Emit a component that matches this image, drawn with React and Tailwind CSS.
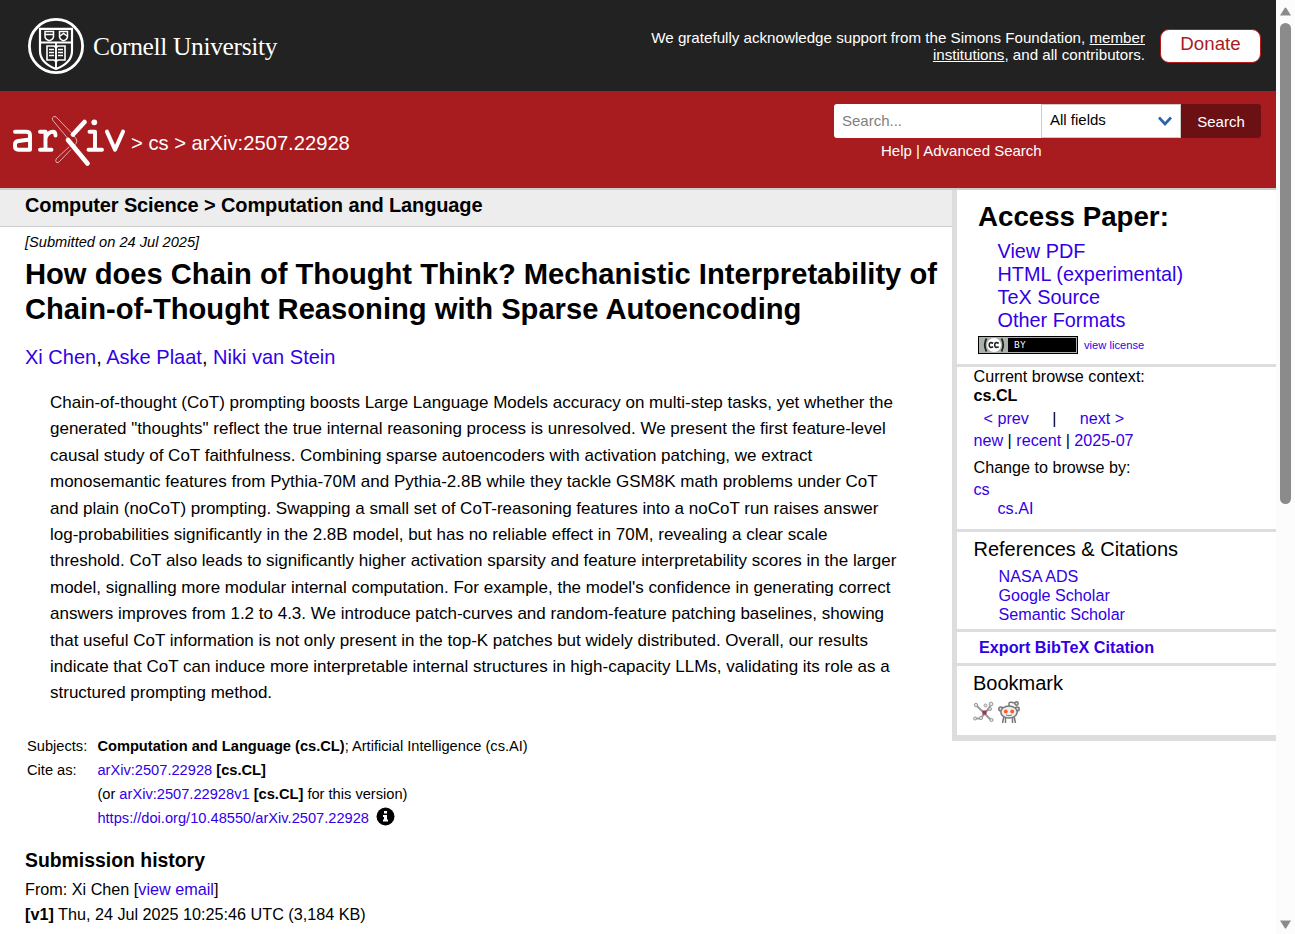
const A = ({ children, className = '' }) => <a href="#" className={'text-[#3200e6] ' + className}>{children}</a>;

const abstractLines = [
  'Chain-of-thought (CoT) prompting boosts Large Language Models accuracy on multi-step tasks, yet whether the',
  'generated "thoughts" reflect the true internal reasoning process is unresolved. We present the first feature-level',
  'causal study of CoT faithfulness. Combining sparse autoencoders with activation patching, we extract',
  'monosemantic features from Pythia-70M and Pythia-2.8B while they tackle GSM8K math problems under CoT',
  'and plain (noCoT) prompting. Swapping a small set of CoT-reasoning features into a noCoT run raises answer',
  'log-probabilities significantly in the 2.8B model, but has no reliable effect in 70M, revealing a clear scale',
  'threshold. CoT also leads to significantly higher activation sparsity and feature interpretability scores in the larger',
  "model, signalling more modular internal computation. For example, the model's confidence in generating correct",
  'answers improves from 1.2 to 4.3. We introduce patch-curves and random-feature patching baselines, showing',
  'that useful CoT information is not only present in the top-K patches but widely distributed. Overall, our results',
  'indicate that CoT can induce more interpretable internal structures in high-capacity LLMs, validating its role as a',
  'structured prompting method.',
];

function Seal() {
  return (
    <svg width="56" height="56" viewBox="0 0 56 56" fill="none" stroke="#fff">
      <circle cx="28" cy="28" r="26.6" strokeWidth="2.8" />
      <path d="M12 10.8H44V33C44 42 37 47.500 28 51C19 47.500 12 42 12 33Z" strokeWidth="2.200" />
      <path d="M12 24.5H44M28 24.5V51" strokeWidth="1.900" />
      <path d="M17 13.5H25.5V18.500C25.5 20.500 23.5 22 21.2 22.800C19 22 17 20.500 17 18.500ZM17 16.500H25.5M31.500 13.500H39.500V18.500C39.500 20.500 37.800 22 35.500 22.800C33.300 22 31.500 20.500 31.500 18.500ZM32 18L35.500 15.500L39 18" strokeWidth="1.500" />
      <path d="M19 28H26L28 29.500L30 28H37V42H30L28 43.500L26 42H19Z" strokeWidth="1.600" />
      <path d="M21 31.500H26M21 34.500H26M21 37.500H26M30 31.500H35M30 34.500H35M30 37.500H35" strokeWidth="1.500" />
    </svg>
  );
}

function ArxivLogo() {
  return (
    <svg width="114" height="52" viewBox="0 0 114 52" fill="none" stroke="#fff" strokeLinecap="round" strokeLinejoin="round">
      <path d="M3 15.700H14Q18 15.700 18 19V33.700H6.500Q3 33.700 3 30.500V28.500Q3 25.500 6.500 25L18 23.500" strokeWidth="3.900" />
      <path d="M28 15.700H33.500V33.700M28 33.700H39.500M33.500 22Q36 15.700 41 15.700Q43.500 15.700 43.500 19.500" strokeWidth="3.900" />
      <path d="M61 18.500L44 .8Q41.500 -.3 40.300 2Q40 3.500 41.500 5.200L55.500 22M61 18.500L64.300 23Q65.500 25.500 64 27.500L61 31M57 31L44.500 42.500Q42.800 45 44.500 46.500Q46 47.200 47.500 45.500L58.500 34" strokeWidth=".8" opacity=".8" />
      <path d="M72.500 6L61 18.500M56 24L75.500 47.500" strokeWidth="4.700" />
      <path d="M77.500 15.700H83V33.700M76.500 33.700H90" strokeWidth="3.900" />
      <circle cx="82.300" cy="6.300" r="2.900" fill="#fff" stroke="none" />
      <path d="M95 15.700L103 33.700L111 15.700" strokeWidth="4" />
    </svg>
  );
}

function CcBadge() {
  return (
    <span className="flex h-[18px] w-[100px] shrink-0 items-center border border-black bg-[#aab2ab] p-px">
      <span className="flex h-full w-[28px] items-center justify-center">
        <svg width="26" height="14" viewBox="0 0 26 14" fill="none">
          <circle cx="13" cy="7" r="7" fill="#fff" />
          <path d="M5.500 .5Q2 7 5.500 13.500M20.500 .5Q24 7 20.500 13.500" stroke="#222" strokeWidth="1.800" />
          <path d="M12.200 5.200Q8.200 3.500 8.200 7T12.200 8.800M17.700 5.200Q13.700 3.500 13.700 7T17.700 8.800" stroke="#222" strokeWidth="1.600" />
        </svg>
      </span>
      <span className="flex h-full flex-1 items-center bg-black pl-[6px] font-['DejaVu_Sans',sans-serif] text-[8.500px] tracking-[.8px] text-white">BY</span>
    </span>
  );
}

function Bibsonomy() {
  return (
    <svg width="22" height="22" viewBox="0 0 22 22" fill="#e4e4e4" stroke="#999" strokeWidth="1">
      <path d="M4 5L18 19M9 16L18 4M12 11L17 8M3 17.500H8L12 11" fill="none" strokeWidth="1.900" />
      <circle cx="3" cy="4" r="1.700" /><circle cx="18" cy="3" r="1.900" /><circle cx="12.500" cy="4.500" r="1.500" /><circle cx="2" cy="17.500" r="1.500" />
      <circle cx="8" cy="17" r="1.600" /><circle cx="18.500" cy="19" r="1.600" /><circle cx="17" cy="8" r="1.500" />
      <rect x="9.500" y="9.500" width="4" height="4" fill="#a03060" stroke="none" />
    </svg>
  );
}

function Reddit() {
  return (
    <svg width="22" height="22" viewBox="0 0 22 22" fill="none" stroke="#777" strokeWidth="1.500">
      <path d="M11 5V3Q11 1 13 1.200L17 2" /><circle cx="18.500" cy="2.500" r="1.700" fill="#ddd" />
      <path d="M6 15L4.500 22M16 15L17.500 22M7.500 17V22M14.500 17V22" />
      <circle cx="2.800" cy="8" r="2" fill="#ddd" /><circle cx="19.200" cy="8" r="2" fill="#ddd" />
      <ellipse cx="11" cy="11" rx="8.200" ry="6" fill="#eee" />
      <circle cx="7.800" cy="10.500" r="1.900" fill="#ff5a28" stroke="none" /><circle cx="14.200" cy="10.500" r="1.900" fill="#ff5a28" stroke="none" />
      <path d="M8 14Q11 15.500 14 14" strokeWidth="1" />
    </svg>
  );
}

export default function App() {
  return (
    <div className="flex h-[934px] w-[1295px] overflow-hidden bg-white font-['Liberation_Sans',Arial,sans-serif] text-black">
      <div className="flex w-[1276px] shrink-0 flex-col">
        <header className="flex h-[91px] shrink-0 justify-between bg-[#222] pl-7 pr-[15px] text-white">
          <div className="flex h-[92px] items-center gap-[9px]">
            <Seal />
            <span className="whitespace-nowrap pt-[2px] font-['Liberation_Serif',serif] text-[25.500px] leading-8 tracking-[-.36px]">Cornell University</span>
          </div>
          <div className="flex items-start gap-[15px] pt-[29px]">
            <p className="whitespace-nowrap text-right text-[15.150px] leading-[17px]">
              We gratefully acknowledge support from the Simons Foundation, <a href="#" className="underline">member<br />institutions</a>, and all contributors.
            </p>
            <a href="#" className="h-[34px] w-[101px] rounded-[9px] border border-[#b31b1b] bg-white text-center text-[18.700px] leading-[28px] text-[#a81c1f]">Donate</a>
          </div>
        </header>

        <div className="flex h-[97px] shrink-0 justify-between bg-[#a81c1f] pl-3 pr-[15px] text-white">
          <div className="flex items-start pt-[25px]">
            <ArxivLogo />
            <span className="whitespace-nowrap pl-[5px] pt-[15px] text-[20.200px] leading-6">&gt; cs &gt; arXiv:2507.22928</span>
          </div>
          <div className="pt-[13px]">
            <div className="flex h-[34px]">
              <div className="w-[207px] rounded-l-[3px] bg-white pl-2 text-[15px] leading-[34px] text-[#808080]">Search...</div>
              <div className="flex w-[140px] justify-between border border-[#ccc] bg-white pl-[8px] pr-2 text-[15px] leading-[30px] text-black">
                All fields
                <svg className="mt-[11px]" width="14" height="11" viewBox="0 0 14 11" fill="none" stroke="#2a62ad" strokeWidth="2.600"><path d="M1 1.500L7 8L13 1.500" /></svg>
              </div>
              <div className="w-[80px] rounded-r-[3px] bg-[#6b1013] text-center text-[15px] leading-[35px]">Search</div>
            </div>
            <p className="whitespace-nowrap pl-[47px] pt-1 text-[15px] leading-[18px]">Help | Advanced Search</p>
          </div>
        </div>

        <div className="flex flex-1 items-start border-t-2 border-[#ccc]">
          <main className="w-[952px] shrink-0 whitespace-nowrap">
            <h1 className="h-[37px] border-b border-[#ccc] bg-[#ededed] pl-[25px] text-[20px] font-bold leading-[30px] tracking-[-.125px]">Computer Science &gt; Computation and Language</h1>
            <div className="pl-[25px]">
              <p className="pt-[6px] text-[14.650px] italic leading-[18px]">[Submitted on 24 Jul 2025]</p>
              <h2 className="pt-[6px] text-[29.170px] font-bold leading-[35px]">How does Chain of Thought Think? Mechanistic Interpretability of<br />Chain-of-Thought Reasoning with Sparse Autoencoding</h2>
              <p className="pt-[18px] text-[20.030px] leading-6"><A>Xi Chen</A>, <A>Aske Plaat</A>, <A>Niki van Stein</A></p>
              <p className="pl-[25px] pt-[21px] text-[17px] leading-[26.400px]">
                {abstractLines.map((l) => <span key={l} className="block">{l}</span>)}
              </p>
              <div className="grid grid-cols-[70.400px_1fr] pl-[2px] pt-[27px] text-[14.650px] leading-[24px]">
                <span>Subjects:</span><span><b>Computation and Language (cs.CL)</b>; Artificial Intelligence (cs.AI)</span>
                <span>Cite as:</span><span><A>arXiv:2507.22928</A> <b>[cs.CL]</b></span>
                <span className="col-start-2">(or <A>arXiv:2507.22928v1</A> <b>[cs.CL]</b> for this version)</span>
                <span className="col-start-2 flex items-center gap-[7px] leading-[25px]">
                  <A>https://doi.org/10.48550/arXiv.2507.22928</A>
                  <svg className="mb-[3px]" width="19" height="19" viewBox="0 0 19 19"><circle cx="9.500" cy="9.500" r="9" fill="#000" /><path d="M8 4H11V6.500H8ZM7 8H11V12.500H12V14.500H7V12.500H8V10H7Z" fill="#fff" /></svg>
                </span>
              </div>
              <h2 className="pt-[17px] text-[19.400px] font-bold leading-6">Submission history</h2>
              <p className="pt-[5px] text-[16.200px] leading-[25px]">From: Xi Chen [<A>view email</A>]<br /><b>[v1]</b> Thu, 24 Jul 2025 10:25:46 UTC (3,184 KB)</p>
            </div>
          </main>

          <aside className="w-[324px] whitespace-nowrap border-b-[6px] border-l-[5px] border-[#ddd] text-[16.150px]">
            <section className="h-[177px] border-b-[3px] border-[#ddd] pl-[21px] pt-[10px]">
              <h2 className="text-[27.700px] font-bold leading-[34px]">Access Paper:</h2>
              <ul className="pl-[19.500px] pt-[6px] text-[19.850px] leading-[23px]">
                <li><A>View PDF</A></li><li><A>HTML (experimental)</A></li><li><A>TeX Source</A></li><li><A>Other Formats</A></li>
              </ul>
              <div className="flex h-[22px] items-end gap-[6px]"><CcBadge /><A className="text-[11.200px] leading-[18px]">view license</A></div>
            </section>
            <section className="h-[165px] border-b-[3px] border-[#ddd] pl-[16.500px]">
              <p className="leading-[19px]">Current browse context:<br /><b>cs.CL</b></p>
              <p className="flex pl-[10px] pt-[3px] leading-[20px]"><A>&lt; prev</A><span className="w-[51px] text-center">|</span><A>next &gt;</A></p>
              <p className="pt-px leading-[22px]"><A>new</A> | <A>recent</A> | <A>2025-07</A></p>
              <p className="pt-[6px] leading-[20px]">Change to browse by:</p>
              <p className="pt-[2px] leading-[20px]"><A>cs</A></p>
              <p className="pl-[24px] leading-[18px]"><A>cs.AI</A></p>
            </section>
            <section className="h-[100px] border-b-[3px] border-[#ddd] pl-[16.500px] pt-[5px]">
              <h3 className="text-[20px] leading-[24px]">References &amp; Citations</h3>
              <ul className="pl-[25px] pt-[6px] leading-[19px]"><li><A>NASA ADS</A></li><li><A>Google Scholar</A></li><li><A>Semantic Scholar</A></li></ul>
            </section>
            <section className="h-[34px] border-b-[3px] border-[#ddd] pl-[22px] text-[16.200px] font-bold leading-[30px]"><A>Export BibTeX Citation</A></section>
            <section className="h-[69px] pl-[16px] pt-[5px]">
              <h3 className="text-[20px] leading-[24px]">Bookmark</h3>
              <div className="flex gap-[3px] pt-[6px]"><Bibsonomy /><Reddit /></div>
            </section>
          </aside>
        </div>
      </div>
      <div className="flex w-[19px] shrink-0 flex-col items-center bg-[#fcfcfc]">
        <svg className="mt-[7px] shrink-0" width="13" height="9" viewBox="0 0 13 9"><path d="M1 8.500L5.700 1Q6.500 0 7.300 1L12 8.500Z" fill="#8b8b8b" /></svg>
        <div className="mt-[7px] h-[481px] w-[11px] rounded-full bg-[#8b8b8b]" />
        <svg className="mb-[5px] mt-auto" width="13" height="9" viewBox="0 0 13 9"><path d="M1 .5L5.700 8Q6.500 9 7.300 8L12 .5Z" fill="#8b8b8b" /></svg>
      </div>
    </div>
  );
}
